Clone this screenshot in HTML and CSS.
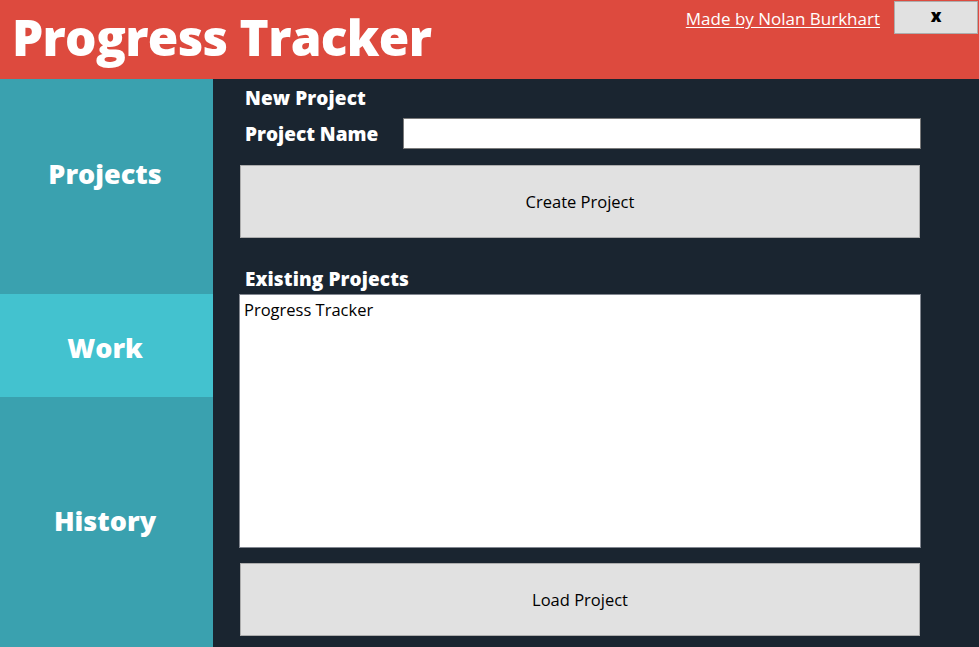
FILE: index.html
```html
<!DOCTYPE html>
<html>
<head>
<meta charset="utf-8">
<link rel="stylesheet" href="styles.css">
</head>
<body>
<header class="header">
  <h1 class="title">Progress Tracker</h1>
  <div class="header-right">
    <a class="credit" href="#">Made by Nolan Burkhart</a>
    <button class="close-btn">x</button>
  </div>
</header>
<div class="app">
  <nav class="sidebar">
    <div class="nav-item nav-projects">Projects</div>
    <div class="nav-item nav-work">Work</div>
    <div class="nav-item nav-history">History</div>
  </nav>
  <main class="content">
    <div class="section-title">New Project</div>
    <div class="name-row">
      <label class="field-label">Project Name</label>
      <input class="name-input" type="text">
    </div>
    <button class="big-btn create-btn">Create Project</button>
    <div class="section-title existing-title">Existing Projects</div>
    <div class="list-box">
      <div class="list-item">Progress Tracker</div>
    </div>
    <button class="big-btn load-btn">Load Project</button>
  </main>
</div>
</body>
</html>
```

FILE: styles.css
```css
* { box-sizing: border-box; }
html, body { margin: 0; padding: 0; height: 100%; }
body {
  font-family: "Open Sans", "Noto Sans", sans-serif;
  background: #1a2530;
  overflow: hidden;
}
.header {
  height: 79px;
  background: #dd4a3e;
  display: flex;
  justify-content: space-between;
  align-items: flex-start;
}
.title {
  margin: 0;
  padding: 2px 0 0 12px;
  color: #fff;
  font-size: 49.5px;
  font-weight: 800;
  line-height: 70px;
  letter-spacing: -0.7px;
}
.header-right {
  display: flex;
  align-items: flex-start;
  padding-top: 1px;
}
.credit {
  color: #fff;
  font-size: 17px;
  line-height: 20px;
  margin-top: 8px;
  margin-right: 14px;
  text-decoration: underline;
  text-underline-offset: 2px;
}
.close-btn {
  width: 84px;
  height: 33px;
  margin-right: 1px;
  background: #e1e1e1;
  border: 1px solid #adadad;
  font-family: "Open Sans", sans-serif;
  font-weight: 800;
  font-size: 17px;
  color: #000;
  padding: 0 0 4px;
}
.app {
  display: flex;
  height: 568px;
}
.sidebar {
  width: 213px;
  flex-shrink: 0;
  display: flex;
  flex-direction: column;
  background: #3aa1af;
}
.nav-item {
  display: flex;
  align-items: center;
  justify-content: center;
  color: #fff;
  font-weight: 800;
  font-size: 27px;
  padding-right: 3px;
}
.nav-projects { height: 215px; padding-bottom: 26px; }
.nav-work { height: 103px; background: #43c2cf; padding-top: 4px; }
.nav-history { flex: 1; padding-bottom: 4px; }
.content {
  flex: 1;
  min-width: 0;
  padding: 7px 58px 0 26px;
  display: flex;
  flex-direction: column;
}
.section-title {
  color: #fff;
  font-weight: 800;
  font-size: 19px;
  line-height: 24px;
  padding-left: 6px;
  letter-spacing: 0.1px;
}
.name-row {
  display: flex;
  align-items: center;
  margin-top: 8px;
  padding-left: 6px;
}
.field-label {
  color: #fff;
  font-weight: 800;
  font-size: 19px;
  width: 158px;
  letter-spacing: 0px;
}
.name-input {
  flex: 1;
  height: 31px;
  border: 1px solid #7a7a7a;
  background: #fff;
}
.big-btn {
  height: 73px;
  background: #e1e1e1;
  border: 1px solid #adadad;
  font-family: "Open Sans", sans-serif;
  font-size: 16.5px;
  color: #000;
  width: 680px;
  margin-left: 1px;
}
.create-btn { margin-top: 16px; }
.existing-title { margin-top: 29px; }
.list-box {
  margin-top: 3px;
  width: 682px;
  height: 254px;
  background: #fff;
  border: 1px solid #828790;
  padding: 4px 4px;
}
.list-item {
  font-size: 16.5px;
  line-height: 22px;
  color: #000;
}
.load-btn { margin-top: 15px; }
```
